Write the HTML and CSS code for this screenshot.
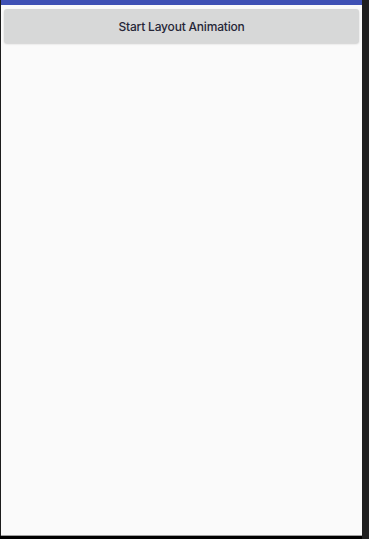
FILE: index.html
```html
<!DOCTYPE html>
<html>
<head>
<meta charset="utf-8">
<link rel="stylesheet" href="styles.css">
</head>
<body>
<div class="frame">
  <div class="left-col">
    <div class="left-edge"></div>
    <div class="app">
      <div class="appbar"></div>
      <div class="content">
        <button class="btn">Start Layout Animation</button>
      </div>
    </div>
  </div>
  <div class="right-edge"></div>
</div>
</body>
</html>
```

FILE: styles.css
```css
html, body {
  margin: 0;
  padding: 0;
  width: 369px;
  height: 539px;
  overflow: hidden;
  background: #000;
}
.frame {
  display: flex;
  height: 539px;
}
.left-col {
  display: flex;
  width: 362px;
  height: 536px;
  background: #000;
}
.left-edge {
  width: 1px;
  background: #1c1c1c;
}
.app {
  flex: 1;
  display: flex;
  flex-direction: column;
  background: #fafafa;
  border-bottom: 1px solid #a0a0a0;
}
.appbar {
  height: 5px;
  background: #3f51b5;
}
.content {
  padding: 4px 3px 0 3px;
}
.btn {
  display: block;
  width: 100%;
  height: 34px;
  margin: 0;
  border: none;
  border-radius: 3px;
  background: #d7d8d8;
  box-shadow: 0 1px 2px rgba(0,0,0,0.18);
  font-family: "Inter", "Roboto", sans-serif;
  font-weight: 500;
  font-size: 12px;
  letter-spacing: -0.2px;
  color: #262637;
  padding: 0;
}
.right-edge {
  width: 7px;
  background: #1f1f1f;
}
```
